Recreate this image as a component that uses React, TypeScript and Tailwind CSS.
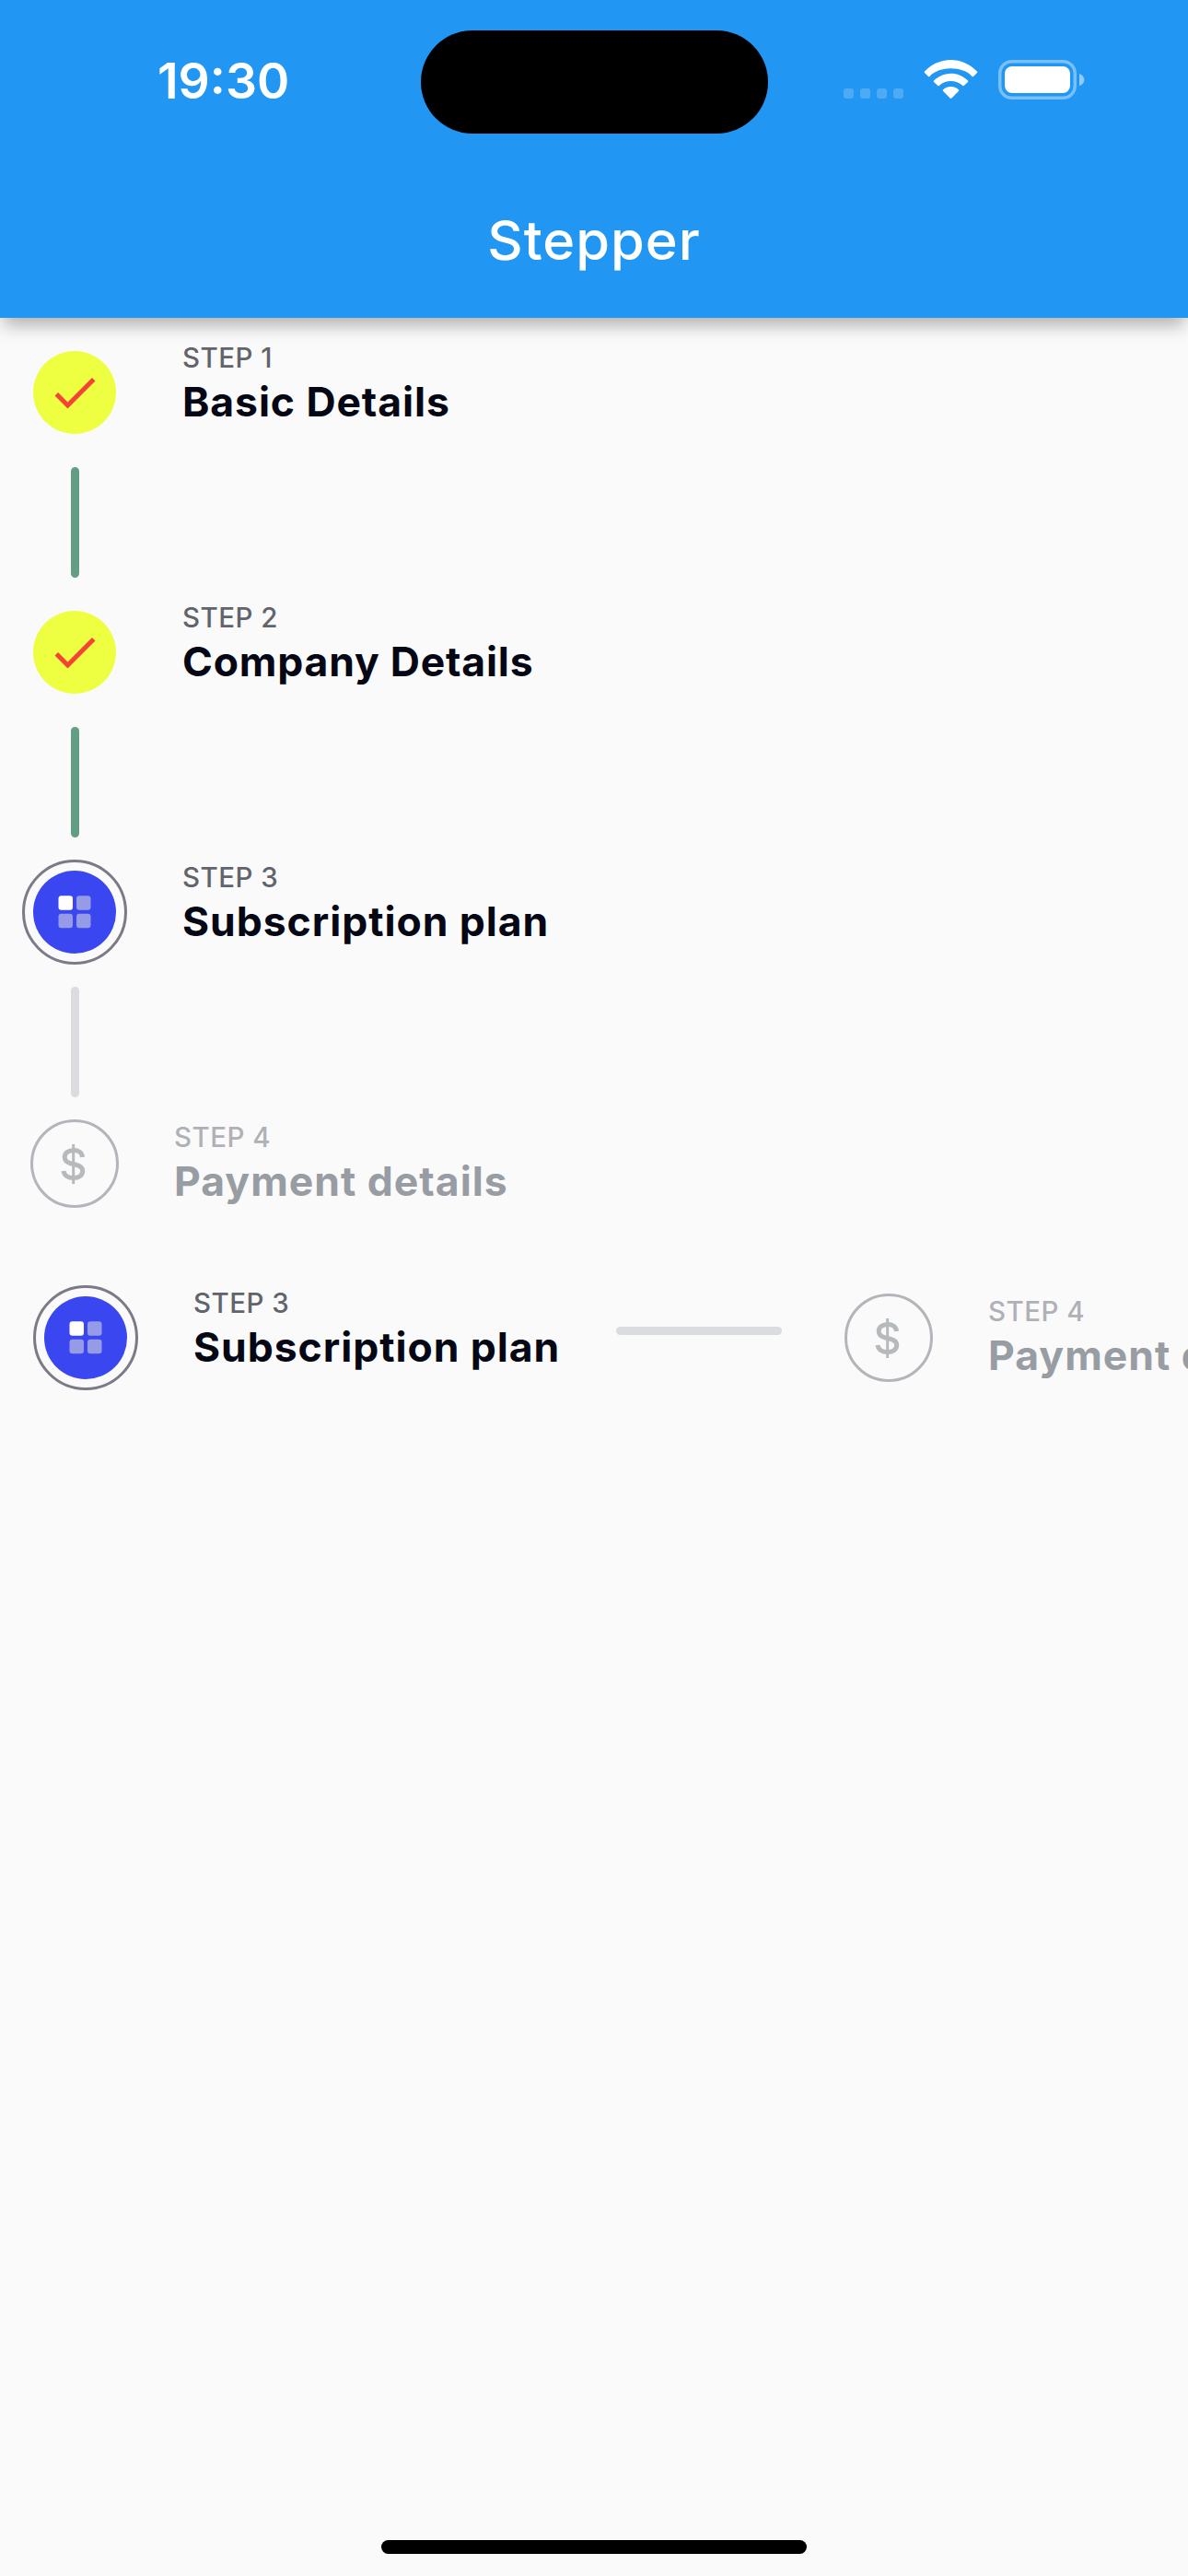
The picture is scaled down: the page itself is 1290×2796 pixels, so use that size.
import React from "react";

type Status = "done" | "active" | "pending";

function Marker({ status }: { status: Status }) {
  if (status === "done") {
    return (
      <div className="flex size-[90px] shrink-0 items-center justify-center rounded-full bg-[#eeff41]">
        <svg className="size-[60px]" viewBox="0 0 24 24" fill="#f44336">
          <path d="M9 16.17L4.83 12l-1.42 1.41L9 19 21 7l-1.41-1.41z" />
        </svg>
      </div>
    );
  }
  if (status === "active") {
    return (
      <div className="flex size-[114px] shrink-0 items-center justify-center rounded-full border-[3px] border-[#7b7a87]">
        <div className="flex size-[90px] items-center justify-center rounded-full bg-[#3a46ef]">
          <svg className="size-[36px]" viewBox="0 0 36 36" fill="#959be6">
            <rect x="0.500" y="0.200" width="15.500" height="15.500" rx="3" fill="#fff" />
            <rect x="20" y="0.200" width="15.500" height="15.500" rx="3" />
            <rect x="0.500" y="19.800" width="15.500" height="15.500" rx="3" />
            <rect x="20" y="19.800" width="15.500" height="15.500" rx="3" />
          </svg>
        </div>
      </div>
    );
  }
  return (
    <div className="flex size-[96px] shrink-0 items-center justify-center rounded-full border-[3px] border-[#b5b4bb]">
      <svg className="size-[48px]" viewBox="0 0 48 48" fill="none" stroke="#b7babd">
        <path d="M22.700 3V46" strokeWidth="3" />
        <path
          d="M32.5 17C32.200 12.200 28.500 9.500 22.900 9.500C17.200 9.500 13.200 12.400 13.200 17C13.200 21 16 22.900 20.600 24L25.500 25.200C30.500 26.400 32.700 28.300 32.700 32C32.700 36.700 28.800 39.600 22.700 39.600C16.500 39.600 12.600 36.600 12 32"
          strokeWidth="5"
        />
      </svg>
    </div>
  );
}

function StepText({ status, label, title, titleClass }: { status: Status; label: string; title: string; titleClass: string }) {
  const pending = status === "pending";
  return (
    <div className="whitespace-nowrap pt-px">
      <div className={`text-[29.5px] font-[450] leading-[36px] tracking-[0.45px] ${pending ? "text-[#b0b0b7]" : "text-[#61646b]"}`}>{label}</div>
      <div className={`mt-[3px] text-[44.5px] font-[650] leading-[54px] ${titleClass} ${pending ? "text-[#989da4]" : "text-[#050714]"}`}>
        {title}
      </div>
    </div>
  );
}

function StatusIcons() {
  return (
    <svg className="mt-[60px] ml-[76.5px] h-[52px] w-[270px] shrink-0" viewBox="910 60 270 52" fill="none">
      <g fill="#fff" fillOpacity=".2">
        <rect x="916" y="96" width="11" height="11" rx="3" />
        <rect x="934" y="96" width="11" height="11" rx="3" />
        <rect x="952" y="96" width="11" height="11" rx="3" />
        <rect x="970" y="96" width="11" height="11" rx="3" />
      </g>
      <g fill="#fff">
        <path d="M1004 77.5Q1003.300 78.300 1004 79L1008 82.900Q1008.700 83.600 1009.500 82.900C1019.500 71.500 1045.500 71.500 1055.500 82.900Q1056.300 83.600 1057 82.900L1061 79Q1061.700 78.300 1061 77.500C1045 60.700 1020 60.700 1004 77.500Z" />
        <path d="M1014 87.500Q1013.500 88.200 1014 88.900L1018.300 93Q1019 93.700 1019.800 93C1026.500 86.200 1038.500 86.200 1045.200 93Q1046 93.700 1046.700 93L1051 88.900Q1051.500 88.200 1051 87.500C1040.500 77 1024.500 77 1014 87.500Z" />
        <path d="M1024.200 97.300Q1023.500 98.200 1024.200 99L1031.600 106.500Q1032.500 107.400 1033.400 106.500L1040.800 99Q1041.500 98.200 1040.800 97.300C1036 93 1029 93 1024.200 97.300Z" />
        <rect x="1091" y="72" width="71" height="29" rx="8" />
      </g>
      <rect x="1085.750" y="66.750" width="81.500" height="39.500" rx="13" stroke="#fff" strokeOpacity=".4" strokeWidth="3.500" />
      <path d="M1172 80C1179.200 82.500 1179.200 90.800 1172 93.300Z" fill="#fff" fillOpacity=".5" />
    </svg>
  );
}

const steps: { status: Status; label: string; title: string; titleClass: string; line?: string }[] = [
  { status: "done", label: "STEP 1", title: "Basic Details", titleClass: "tracking-[0.9px]", line: "bg-[#629e83]" },
  { status: "done", label: "STEP 2", title: "Company Details", titleClass: "tracking-[0.8px]", line: "bg-[#629e83]" },
  { status: "active", label: "STEP 3", title: "Subscription plan", titleClass: "tracking-[0.95px]", line: "bg-[#dbdce0]" },
  { status: "pending", label: "STEP 4", title: "Payment details", titleClass: "tracking-[1px]" },
];

export default function App() {
  return (
    <div className="flex h-[2796px] w-[1290px] flex-col overflow-hidden bg-[#fafafa] font-['Inter',sans-serif]">
      <header className="relative h-[345px] shrink-0 bg-[#2196f3] text-white shadow-[0_12px_18px_-4px_rgba(0,0,0,0.3)]">
        <div className="flex h-[180px] items-start">
          <div className="mt-[56px] ml-[171px] w-[285.5px] text-[53.5px] font-semibold leading-[64px] tracking-[0px]">19:30</div>
          <div className="mt-[33px] h-[111.5px] w-[377px] shrink-0 rounded-full bg-black" />
          <StatusIcons />
        </div>
        <h1 className="mt-[42px] text-center text-[59.5px] font-medium leading-[76px] tracking-[1px]">Stepper</h1>
      </header>

      <main>
        <section className="pt-[24px]">
          {steps.map((s) => (
            <div key={s.label} className="flex h-[282px] items-start last:h-[168px]">
              <div className="flex w-[162px] flex-col items-center">
                <div className={s.status === "done" ? "mt-3" : ""}>
                  <Marker status={s.status} />
                </div>
                {s.line && (
                  <div className={`h-[120px] w-[9px] rounded-full ${s.status === "done" ? "mt-9" : "mt-6"} ${s.line}`} />
                )}
              </div>
              <div className={s.status === "pending" ? "ml-[27px]" : "ml-[36px]"}>
                <StepText {...s} />
              </div>
            </div>
          ))}
        </section>

        <section className="flex items-start pl-9 pt-3">
          <Marker status="active" />
          <div className="ml-[60px] w-[399px] shrink-0">
            <StepText {...steps[2]} />
          </div>
          <div className="mt-[45px] ml-[60px] h-[9px] w-[180px] shrink-0 rounded-full bg-[#dbdce0]" />
          <div className="mt-[9px] ml-[68px] shrink-0">
            <Marker status="pending" />
          </div>
          <div className="mt-[9px] ml-[60px]">
            <StepText {...steps[3]} />
          </div>
        </section>
      </main>

      <div className="mx-auto mt-auto mb-6 h-[15px] w-[462px] shrink-0 rounded-full bg-black" />
    </div>
  );
}
